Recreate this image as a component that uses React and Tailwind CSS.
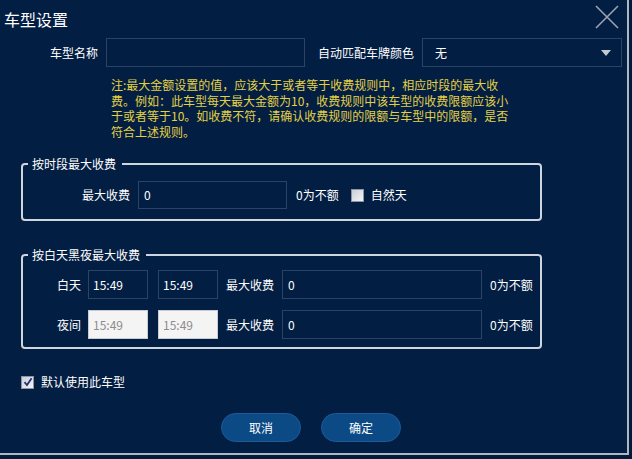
import React from "react";

const font = { fontFamily: '"Noto Sans CJK SC", "Noto Sans", sans-serif' };

function Box({ checked }) {
  return (
    <span className="relative inline-flex h-[13px] w-[13px] shrink-0 items-center justify-center border border-[#8d95a3] bg-gradient-to-br from-[#c9ced6] to-[#f4f5f7]">
      {checked && (
        <svg width="10" height="10" viewBox="0 0 10 10" className="absolute">
          <path d="M1.5 5.2 L4 8 L8.6 1.3" fill="none" stroke="#2a2f7a" strokeWidth="1.8" />
        </svg>
      )}
    </span>
  );
}

export default function App() {
  return (
    <div className="h-[459px] w-[632px] bg-[#021a3c] text-white" style={font}>
      <div className="flex h-[455px] w-[629px] flex-col border-b-2 border-r-2 border-[#aeb6c2] bg-[#031e43]">
        {/* title bar */}
        <div className="flex h-[38px] items-start justify-between">
          <div className="ml-[4px] mt-[8px] text-[16px] leading-[22px] text-white">车型设置</div>
          <svg width="24" height="24" viewBox="0 0 24 24" className="mr-[8px] mt-[5px]">
            <path d="M1 1 L23 23 M23 1 L1 23" stroke="#9aa3b3" strokeWidth="1.6" fill="none" />
          </svg>
        </div>

        {/* row 1 */}
        <div className="flex h-[29px] items-center text-[12px]">
          <div className="w-[98px] text-right">车型名称</div>
          <div className="ml-[8px] h-[29px] w-[199px] border border-[#2b4364]" />
          <div className="ml-[13px] w-[96px] text-right">自动匹配车牌颜色</div>
          <div className="ml-[8px] flex h-[29px] w-[200px] items-center justify-between border border-[#2b4364] pl-[12px] pr-[10px]">
            <span>无</span>
            <svg width="10" height="6" viewBox="0 0 10 6">
              <path d="M0 0 L10 0 L5 6 Z" fill="#c3c9d2" />
            </svg>
          </div>
        </div>

        {/* note */}
        <div className="ml-[111px] mt-[10px] text-[12px] leading-[15.5px] text-[#e3d145]">
          <div className="whitespace-nowrap">注:最大金额设置的值，应该大于或者等于收费规则中，相应时段的最大收</div>
          <div className="whitespace-nowrap">费。例如：此车型每天最大金额为10，收费规则中该车型的收费限额应该小</div>
          <div className="whitespace-nowrap">于或者等于10。如收费不符，请确认收费规则的限额与车型中的限额，是否</div>
          <div className="whitespace-nowrap">符合上述规则。</div>
        </div>

        {/* group 1 */}
        <fieldset className="ml-[21px] mt-[17px] w-[521px] rounded-[4px] border-2 border-[#cfd5de] pb-[10px] pt-[9px] text-[12px]">
          <legend className="ml-[5px] px-[4px] pr-[6px] leading-[16px]">按时段最大收费</legend>
          <div className="flex h-[28px] items-center">
            <div className="w-[107px] text-right">最大收费</div>
            <div className="ml-[8px] flex h-[28px] w-[149px] items-center border border-[#2b4364] pl-[5px]">0</div>
            <div className="ml-[9px]">0为不额</div>
            <div className="ml-[12px] flex items-center">
              <Box />
            </div>
            <div className="ml-[7px]">自然天</div>
          </div>
        </fieldset>

        {/* group 2 */}
        <fieldset className="ml-[21px] mt-[26px] w-[521px] rounded-[4px] border-2 border-[#cfd5de] pb-[8px] pt-[7px] text-[12px]">
          <legend className="ml-[5px] px-[4px] pr-[6px] leading-[16px]">按白天黑夜最大收费</legend>
          <div className="flex flex-col gap-[11px]">
            <div className="flex h-[29px] items-center">
              <div className="w-[58px] text-right">白天</div>
              <div className="ml-[7px] flex h-[29px] w-[60px] items-center border border-[#2b4364] pl-[4px]">15:49</div>
              <div className="ml-[10px] flex h-[29px] w-[60px] items-center border border-[#2b4364] pl-[4px]">15:49</div>
              <div className="ml-[8px]">最大收费</div>
              <div className="ml-[8px] flex h-[29px] w-[200px] items-center border border-[#2b4364] pl-[5px]">0</div>
              <div className="ml-[8px]">0为不额</div>
            </div>
            <div className="flex h-[29px] items-center">
              <div className="w-[58px] text-right">夜间</div>
              <div className="ml-[7px] flex h-[29px] w-[60px] items-center border border-[#c8ccd2] bg-[#f4f4f4] pl-[4px] text-[#8c8c8c]">15:49</div>
              <div className="ml-[10px] flex h-[29px] w-[60px] items-center border border-[#c8ccd2] bg-[#f4f4f4] pl-[4px] text-[#8c8c8c]">15:49</div>
              <div className="ml-[8px]">最大收费</div>
              <div className="ml-[8px] flex h-[29px] w-[200px] items-center border border-[#2b4364] pl-[5px]">0</div>
              <div className="ml-[8px]">0为不额</div>
            </div>
          </div>
        </fieldset>

        {/* default checkbox */}
        <div className="ml-[21px] mt-[26px] flex h-[14px] items-center text-[12px]">
          <Box checked />
          <span className="ml-[7px]">默认使用此车型</span>
        </div>

        {/* buttons */}
        <div className="ml-[221px] mt-[24px] flex gap-[20px] text-[12px]">
          <div className="flex h-[29px] w-[80px] items-center justify-center rounded-full border border-[#1d5a98] bg-[#0b4a85]">取消</div>
          <div className="flex h-[29px] w-[80px] items-center justify-center rounded-full border border-[#1d5a98] bg-[#0b4a85]">确定</div>
        </div>
      </div>
    </div>
  );
}
